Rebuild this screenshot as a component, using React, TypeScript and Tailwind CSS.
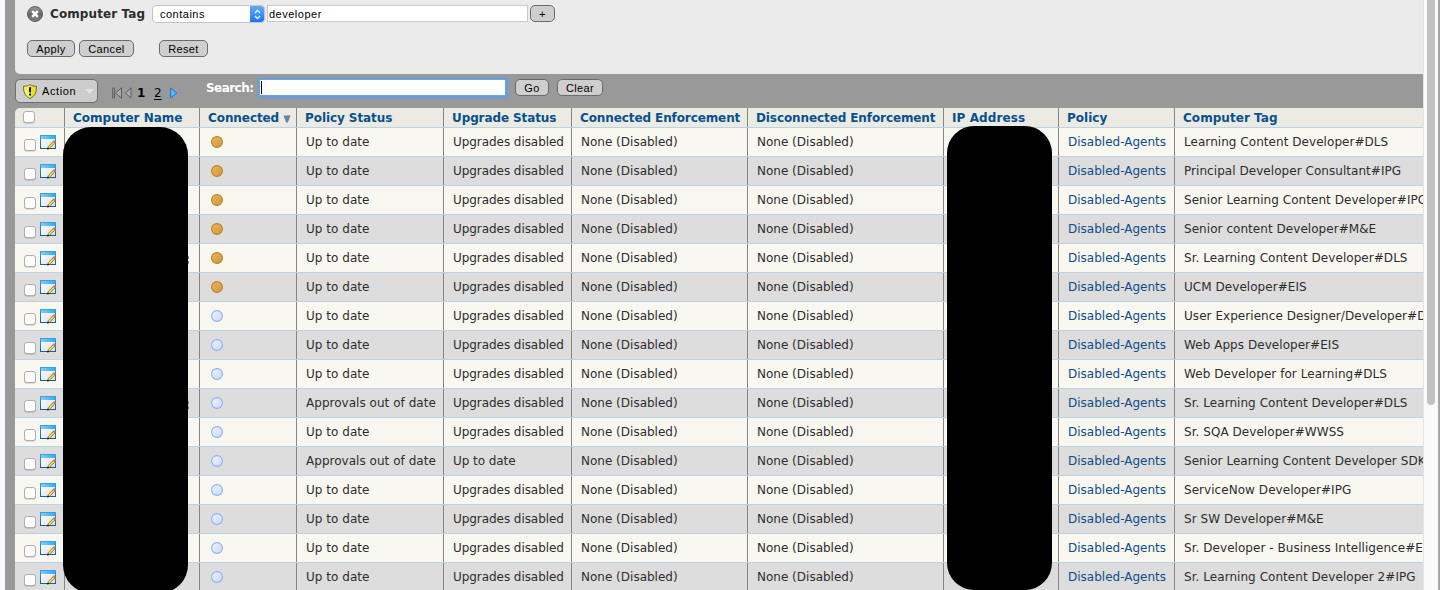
import type { ReactNode } from "react";

const GRID =
  "grid grid-cols-[49px_135px_97px_147px_128px_176px_196px_115px_116px_249px]";

type Row = { tag: string; on?: boolean; status?: string; upgrade?: string; peek?: boolean };

const rows: Row[] = [
  { tag: "Learning Content Developer#DLS", on: true },
  { tag: "Principal Developer Consultant#IPG", on: true },
  { tag: "Senior Learning Content Developer#IPG", on: true },
  { tag: "Senior content Developer#M&E", on: true },
  { tag: "Sr. Learning Content Developer#DLS", on: true, peek: true },
  { tag: "UCM Developer#EIS", on: true },
  { tag: "User Experience Designer/Developer#DLS" },
  { tag: "Web Apps Developer#EIS" },
  { tag: "Web Developer for Learning#DLS" },
  { tag: "Sr. Learning Content Developer#DLS", status: "Approvals out of date", peek: true },
  { tag: "Sr. SQA Developer#WWSS" },
  { tag: "Senior Learning Content Developer SDK", status: "Approvals out of date", upgrade: "Up to date" },
  { tag: "ServiceNow Developer#IPG" },
  { tag: "Sr SW Developer#M&E" },
  { tag: "Sr. Developer - Business Intelligence#EIS" },
  { tag: "Sr. Learning Content Developer 2#IPG" },
];

function Button({ children, className }: { children: ReactNode; className: string }) {
  return (
    <button
      className={`flex h-[17px] shrink-0 items-center justify-center rounded-[5px] border border-[#6b6b6b] bg-[#cfcfcf] pt-px font-['Liberation_Sans'] text-[11px] leading-none tracking-[0.35px] text-black ${className}`}
    >
      {children}
    </button>
  );
}

function Checkbox({ className }: { className: string }) {
  return (
    <span
      className={`size-3 shrink-0 rounded-[3px] border border-[#b0b0b0] bg-white shadow-[0_0.5px_0.5px_rgba(0,0,0,0.25)] ${className}`}
    />
  );
}

function EditIcon() {
  return (
    <svg width="17" height="15" viewBox="0 0 17 15" className="mt-[7px] ml-1 shrink-0">
      <defs>
        <linearGradient id="win" x1="0" y1="0" x2="1" y2="1">
          <stop offset="0" stopColor="#fff" />
          <stop offset="1" stopColor="#dcdfe6" />
        </linearGradient>
        <linearGradient id="frame" x1="0" y1="0" x2="0" y2="1">
          <stop offset="0" stopColor="#3b9fe6" />
          <stop offset="1" stopColor="#1a5f9e" />
        </linearGradient>
        <linearGradient id="bar" x1="0" y1="0" x2="1" y2="0">
          <stop offset="0" stopColor="#8cc8f4" />
          <stop offset="1" stopColor="#22b4f6" />
        </linearGradient>
      </defs>
      <rect x="0.5" y="0.5" width="15" height="13" fill="url(#win)" stroke="url(#frame)" />
      <rect x="1" y="1" width="14" height="3" fill="url(#bar)" />
      <path d="M8.600 12.900L14.200 7" stroke="#8a6f1c" strokeWidth="2.800" />
      <path d="M8.800 12.600L14 7.200" stroke="#f4dc5c" strokeWidth="1.600" />
      <path d="M13.700 7.500L15.100 6" stroke="#e4675f" strokeWidth="2.600" />
      <path d="M7 14.600l.8-2.300 1.700 1.600z" fill="#111" />
    </svg>
  );
}

function Dot({ on }: { on?: boolean }) {
  return (
    <svg width="12" height="12" viewBox="0 0 12 12" className="mt-2 ml-[11px]">
      <defs>
        <linearGradient id="amber" x1="0" y1="0" x2="1" y2="1">
          <stop offset="0" stopColor="#f0b555" />
          <stop offset="1" stopColor="#cf9646" />
        </linearGradient>
        <linearGradient id="pale" x1="0" y1="0" x2="1" y2="1">
          <stop offset="0" stopColor="#eef3ff" />
          <stop offset="1" stopColor="#cadaff" />
        </linearGradient>
      </defs>
      <circle cx="6" cy="6" r="5.4" fill={on ? "url(#amber)" : "url(#pale)"} stroke={on ? "#b98426" : "#8eaefa"} strokeWidth="1.1" />
    </svg>
  );
}

function Head({ children, className = "" }: { children?: ReactNode; className?: string }) {
  return (
    <div className={`flex border-l border-[#858585] pt-px pl-2 text-[12px] leading-[18px] font-bold whitespace-nowrap text-[#07508f] ${className}`}>
      {children}
    </div>
  );
}

function Cell({ children, className = "pl-[9px]" }: { children?: ReactNode; className?: string }) {
  return (
    <div className={`overflow-hidden border-l border-[#858585] text-[12px] leading-7 whitespace-nowrap ${className}`}>
      {children}
    </div>
  );
}

export default function App() {
  return (
    <div className="relative flex h-[590px] w-[1440px] overflow-hidden bg-[#fafafa] font-['DejaVu_Sans',sans-serif] text-[#2d2d2d]">
      <div className="w-[5px] shrink-0 bg-[#f8faff]" />
      <div className="w-[1418px] shrink-0 overflow-hidden bg-[#999] pl-[10px]">
        <div className="h-[74px] rounded-bl-[5px] bg-[#ebebeb]">
          <div className="flex pt-[5px] pl-[12px]">
            <svg width="16" height="17" viewBox="0 0 16 17" className="mt-px shrink-0">
              <defs>
                <linearGradient id="ball" x1="0" y1="0" x2="0" y2="1">
                  <stop offset="0" stopColor="#999" />
                  <stop offset="0.55" stopColor="#666" />
                  <stop offset="1" stopColor="#858585" />
                </linearGradient>
              </defs>
              <circle cx="8" cy="8" r="7.5" fill="url(#ball)" stroke="#5e5e5e" />
              <path d="M5.200 5.200l5.600 5.600M10.800 5.200l-5.600 5.600" stroke="#fff" strokeWidth="2.600" />
            </svg>
            <span className="ml-[7px] w-[102px] text-[12px] leading-[18px] font-bold tracking-[0.1px]">Computer Tag</span>
            <div className="flex h-[18px] w-[113px] overflow-hidden rounded-[4px] border border-[#c4c4c4] bg-white">
              <span className="w-[97px] pl-[7px] font-['Liberation_Sans'] text-[11px] leading-[17px] tracking-[0.5px] text-black">contains</span>
              <span className="-my-px -mr-px flex w-[15px] items-center justify-center bg-gradient-to-b from-[#66aef9] to-[#0f73fb]">
                <svg width="7" height="11" viewBox="0 0 7 11" fill="none" stroke="#fff" strokeWidth="1.200">
                  <path d="M1 4l2.500-2.700L6 4M1 7l2.500 2.700L6 7" />
                </svg>
              </span>
            </div>
            <div className="ml-[2px] h-[17px] w-[261px] border border-[#c9c9c9] bg-white pl-px font-['Liberation_Sans'] text-[11px] leading-[17px] tracking-[0.5px] text-black">
              developer
            </div>
            <Button className="ml-[2px] w-[25px]">+</Button>
          </div>
          <div className="mt-[17px] flex pl-[12px]">
            <Button className="w-12">Apply</Button>
            <Button className="ml-1 w-[55px]">Cancel</Button>
            <Button className="ml-[25px] w-[49px]">Reset</Button>
          </div>
        </div>

        <div className="flex h-[34px] items-start">
          <button className="mt-[5px] flex h-6 w-[83px] shrink-0 items-center rounded-[5px] border border-[#6f6f6f] bg-[#cdcdcd] pl-[7px]">
            <svg width="14" height="15" viewBox="0 0 14 15" className="shrink-0">
              <path d="M7 .5C5.300 2 3 2.400.7 2.100.2 7.500 1.700 12 7 14.500 12.300 12 13.800 7.500 13.300 2.100 11 2.400 8.700 2 7 .5z" fill="#e6e22e" stroke="#716d28" />
              <path d="M7 1v13C2.800 11.800 1.100 8 1.200 2.700 3.500 2.900 5.300 2.400 7 1z" fill="#f6f48b" opacity=".7" />
              <path d="M7 3.300v4.900M7 9.600v2" stroke="#111" strokeWidth="2" />
            </svg>
            <span className="ml-[5px] w-[43px] shrink-0 pt-px text-left font-['Liberation_Sans'] text-[11px] tracking-[0.6px] text-black">Action</span>
            <svg width="9" height="5" viewBox="0 0 9 5" className="shrink-0"><path d="M0 0h9L4.500 5z" fill="#e4e4e4" /></svg>
          </button>
          <svg width="21" height="12" viewBox="0 0 21 12" className="mt-[13px] ml-[14px] shrink-0" fill="#aaa" stroke="#555" strokeWidth=".9">
            <path d="M.7.500v11M2.500.500v11" />
            <path d="M9.500.8v10.400L3.500 6zM19 .8v10.400L13.500 6z" />
          </svg>
          <span className="mt-[11px] ml-1 w-[9px] text-[12px] leading-4 font-bold text-black">1</span>
          <span className="mt-[11px] ml-2 w-[9px] text-[12px] leading-4 text-black underline underline-offset-2">2</span>
          <svg width="8" height="12" viewBox="0 0 8 12" className="mt-[13px] ml-[7px] shrink-0">
            <path d="M.6.900v10.200L6.800 6z" fill="#54b8f8" stroke="#1877cc" />
          </svg>
          <span className="mt-[5px] ml-[28px] w-[53px] text-[12px] leading-[18px] font-bold tracking-[-0.55px] text-white">Search:</span>
          <div className="mt-[5px] flex h-[17px] w-[247px] items-center border border-[#6aa5e3] bg-white pl-px shadow-[0_0_2px_1.5px_#5f9fe3]">
            <span className="h-[13px] w-px bg-black" />
          </div>
          <Button className="mt-[5px] ml-[9px] w-[34px]">Go</Button>
          <Button className="mt-[5px] ml-2 w-[46px]">Clear</Button>
        </div>

        <div className={`${GRID} h-5 overflow-hidden rounded-tl-[5px] border-b border-[#bdd2e4] bg-[#ebebe3]`}>
          <div className="flex pl-2"><Checkbox className="mt-[3px]" /></div>
          <Head>Computer Name</Head>
          <Head className="tracking-[-0.08px]">
            Connected
            <svg width="8" height="8" viewBox="0 0 8 8" className="mt-[6px] ml-[4px] shrink-0">
              <path d="M.5.500h7L4.800 7.500H3.200z" fill="#6581aa" />
            </svg>
          </Head>
          <Head className="tracking-[-0.08px]">Policy Status</Head>
          <Head className="tracking-[-0.1px]">Upgrade Status</Head>
          <Head className="tracking-[-0.1px]">Connected Enforcement</Head>
          <Head className="tracking-[-0.1px]">Disconnected Enforcement</Head>
          <Head className="tracking-[0.1px]">IP Address</Head>
          <Head>Policy</Head>
          <Head className="tracking-[0.05px]">Computer Tag</Head>
        </div>

        {rows.map((r, i) => (
          <div key={i} className={`${GRID} h-[29px] border-b border-[#bdd2e4] ${i % 2 ? "bg-[#dddddd]" : "bg-[#f8f7f0]"}`}>
            <div className="flex pl-[9px]">
              <Checkbox className="mt-[11px]" />
              <EditIcon />
            </div>
            <Cell className="pl-[123px]">
              {r.peek && <span className="mt-[12px] block h-2 w-px border-l border-dashed border-[#5b9cc4]" />}
            </Cell>
            <Cell className="pl-0"><Dot on={r.on} /></Cell>
            <Cell className="pl-[9px] tracking-[0.03px]">{r.status ?? "Up to date"}</Cell>
            <Cell className="pl-[9px] tracking-[-0.06px]">{r.upgrade ?? "Upgrades disabled"}</Cell>
            <Cell>None (Disabled)</Cell>
            <Cell>None (Disabled)</Cell>
            <Cell />
            <Cell className="pl-[9px] text-[#0f4c8a]">Disabled-Agents</Cell>
            <Cell className="pl-[9px] tracking-[0.05px]">{r.tag}</Cell>
          </div>
        ))}
      </div>
      <div className="flex w-[17px] border-l border-[#e4e4e4] pl-[3px]">
        <div className="h-[405px] w-2 rounded-b-[4px] bg-[#c1c1c1]" />
        <div className="ml-[3px] w-[2px] bg-[#a5a5a5]" />
      </div>
      <div className="absolute top-[127px] left-[63px] h-[466px] w-[125px] rounded-[28px] bg-black" />
      <div className="absolute top-[126px] left-[947px] h-[464px] w-[105px] rounded-[27px] bg-black" />
    </div>
  );
}
